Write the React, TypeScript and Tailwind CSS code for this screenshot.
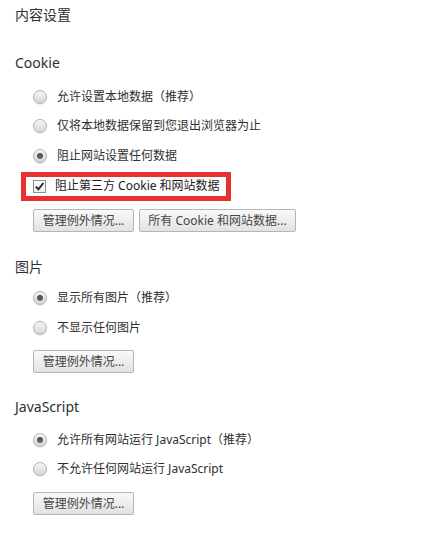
import React from "react";

const font = { fontFamily: '"Noto Sans", "Noto Sans CJK SC", sans-serif' };

function Radio({ checked }: { checked?: boolean }) {
  return (
    <span className="relative flex h-[14px] w-[14px] shrink-0 items-center justify-center rounded-full border border-[#b0b0b0] bg-gradient-to-b from-[#f7f7f7] to-[#d5d5d5] shadow-[0_1px_1px_rgba(0,0,0,0.08)]">
      {checked && <span className="h-[6px] w-[6px] rounded-full bg-gradient-to-b from-[#4a4a4a] to-[#6a6a6a]" />}
    </span>
  );
}

function RadioRow({ label, checked, className }: { label: string; checked?: boolean; className: string }) {
  return (
    <div className={`flex h-5 items-center pl-[33px] ${className}`}>
      <Radio checked={checked} />
      <span className="ml-[10px] text-[12px] leading-5 text-[#303030]">{label}</span>
    </div>
  );
}

function Btn({ label, w }: { label: string; w: string }) {
  return (
    <button
      className={`flex h-[23px] ${w} items-center justify-center rounded-[2px] border border-[#b5b5b5] bg-gradient-to-b from-[#f9f9f9] to-[#e2e2e2] text-[12px] leading-none text-[#444]`}
    >
      {label}
    </button>
  );
}

function Heading({ label, className }: { label: string; className: string }) {
  return <div className={`h-5 pl-[15px] text-[14px] leading-5 text-[#303030] ${className}`}>{label}</div>;
}

export default function App() {
  return (
    <div className="h-[539px] w-[436px] overflow-hidden bg-white pt-[5px]" style={font}>
      <Heading label="内容设置" className="" />
      <Heading label="Cookie" className="mt-[28px]" />
      <RadioRow label="允许设置本地数据（推荐）" className="mt-[14px]" />
      <RadioRow label="仅将本地数据保留到您退出浏览器为止" className="mt-[9px]" />
      <RadioRow label="阻止网站设置任何数据" checked className="mt-[10px]" />
      <div className="relative mt-[10px] flex h-5 items-center pl-[33px]">
        <div className="pointer-events-none absolute left-[21px] top-[-4px] h-[29px] w-[210px] border-[5px] border-[#e8302f]" />
        <span className="relative flex h-[13px] w-[13px] shrink-0 items-center justify-center border border-[#8e8e8e] bg-gradient-to-b from-white to-[#ededed]">
          <svg width="11" height="11" viewBox="0 0 11 11">
            <path d="M1.8 5.6 L4.4 8.3 L9.4 2" fill="none" stroke="#2a2a2a" strokeWidth="2" />
          </svg>
        </span>
        <span className="ml-[9px] text-[12px] leading-5 text-[#1a1a1a]">阻止第三方 Cookie 和网站数据</span>
      </div>
      <div className="mt-[13px] flex gap-[5px] pl-[33px]">
        <Btn label="管理例外情况..." w="w-[101px]" />
        <Btn label="所有 Cookie 和网站数据..." w="w-[157px]" />
      </div>
      <Heading label="图片" className="mt-[25px]" />
      <RadioRow label="显示所有图片（推荐）" checked className="mt-[11px]" />
      <RadioRow label="不显示任何图片" className="mt-[10px]" />
      <div className="mt-[12px] flex pl-[33px]">
        <Btn label="管理例外情况..." w="w-[101px]" />
      </div>
      <Heading label="JavaScript" className="mt-[24px]" />
      <RadioRow label="允许所有网站运行 JavaScript（推荐）" checked className="mt-[13px]" />
      <RadioRow label="不允许任何网站运行 JavaScript" className="mt-[9px]" />
      <div className="mt-[13px] flex pl-[33px]">
        <Btn label="管理例外情况..." w="w-[101px]" />
      </div>
    </div>
  );
}
